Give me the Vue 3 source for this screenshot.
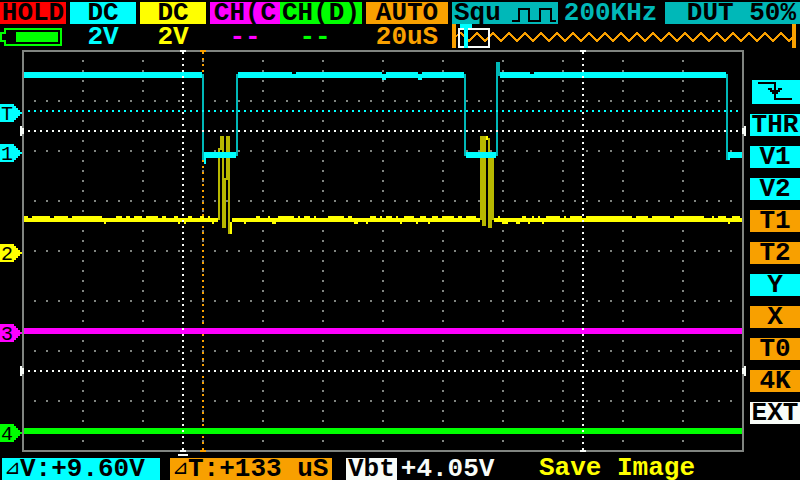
<script setup>
const steps = (from, to, step) => {
  const out = []
  for (let v = from; v <= to; v += step) out.push(v)
  return out
}
const dot = (x, y) => `M${x} ${y}h2v2h-2z`
const box = (x1, y1, x2, y2) => `M${x1} ${y1}H${x2}V${y2}H${x1}z`

const gridDots = [
  ...steps(100, 400, 50).flatMap((y) => steps(34, 730, 12).map((x) => dot(x, y))),
  ...steps(82, 682, 60).flatMap((x) => steps(60, 440, 10).map((y) => dot(x, y)))
].join('')

const hLine = (y) => steps(28, 736, 6).map((x) => dot(x, y)).join('')
const vLine = (x) => steps(58, 448, 6).map((y) => dot(x, y)).join('')

const whiteCursors = [hLine(130), hLine(370), vLine(182), vLine(582)].join('')
const triggerLine = hLine(110)
const timeLine = vLine(202)

const noiseUp = [
  [24, 28], [32, 50], [54, 68], [72, 102], [116, 122], [126, 130], [134, 142], [146, 158],
  [162, 166], [174, 178], [188, 192], [200, 204], [208, 210], [256, 260], [268, 270],
  [278, 294], [298, 300], [304, 310], [314, 316], [328, 344], [348, 352], [370, 376],
  [380, 382], [386, 392], [396, 398], [404, 414], [420, 426], [432, 438], [442, 454],
  [458, 462], [466, 476], [498, 500], [522, 526], [532, 534], [538, 540], [546, 560],
  [564, 566], [570, 582], [586, 632], [636, 648], [652, 670], [674, 704], [712, 714],
  [718, 726], [732, 740]
]
const noiseDown = [
  [104, 106], [178, 180], [184, 186], [212, 214], [244, 246], [272, 276], [354, 358],
  [366, 368], [400, 402], [416, 418], [428, 430], [502, 508], [516, 520], [528, 530],
  [542, 544], [728, 730]
]
const yellowTrace = [
  box(24, 218, 218, 222), box(232, 218, 480, 222), box(494, 218, 742, 222),
  box(230, 222, 232, 234), box(486, 136, 488, 140),
  ...noiseUp.map(([a, b]) => box(a, 216, b, 218)),
  ...noiseDown.map(([a, b]) => box(a, 222, b, 224))
].join('')
const yellowBurst = [
  box(218, 148, 220, 220), box(220, 136, 224, 150), box(222, 150, 224, 228),
  box(224, 178, 226, 228), box(226, 136, 230, 180), box(228, 180, 230, 234),
  box(480, 136, 486, 220), box(482, 220, 486, 226),
  box(488, 138, 490, 158), box(488, 158, 494, 220), box(488, 220, 492, 228)
].join('')
const cyanEdges = [
  box(202, 74, 204, 160), box(236, 74, 238, 156), box(464, 74, 466, 156),
  box(496, 62, 498, 156), box(498, 62, 500, 76), box(726, 74, 728, 160)
].join('')
const cyanTrace = [
  box(24, 72, 202, 78),
  box(238, 74, 464, 78), box(238, 72, 292, 74), box(296, 72, 382, 74),
  box(386, 72, 418, 74), box(422, 72, 464, 74),
  box(382, 78, 386, 80), box(418, 78, 422, 80),
  box(500, 74, 726, 78), box(500, 72, 530, 74), box(534, 72, 726, 74),
  box(204, 152, 236, 158), box(204, 158, 206, 164),
  box(466, 152, 496, 158), box(728, 152, 742, 158), box(728, 158, 730, 160)
].join('')

const markers = [
  { text: 'T', y: 104, tone: 'cyan' },
  { text: '1', y: 144, tone: 'cyan' },
  { text: '2', y: 244, tone: 'yellow' },
  { text: '3', y: 324, tone: 'magenta' },
  { text: '4', y: 424, tone: 'green' }
]

const channels = [
  { id: 'a', label: 'DC', value: '2V', tone: 'cyan' },
  { id: 'b', label: 'DC', value: '2V', tone: 'yellow' },
  { id: 'c', label: 'CH(C', value: '--', tone: 'magenta' },
  { id: 'd', label: 'CH(D)', value: '--', tone: 'green' },
  { id: 't', label: 'AUTO', value: '20uS', tone: 'orange' }
]

const zigzag =
  'M456 36L461 33' + steps(469, 773, 16).map((x) => `L${x} 41L${x + 8} 33`).join('') + 'L789 41L792 38'

const menu = [
  { text: 'THR', tone: 'cyan' },
  { text: 'V1', tone: 'cyan' },
  { text: 'V2', tone: 'cyan' },
  { text: 'T1', tone: 'orange' },
  { text: 'T2', tone: 'orange' },
  { text: 'Y', tone: 'cyan' },
  { text: 'X', tone: 'orange' },
  { text: 'T0', tone: 'orange' },
  { text: '4K', tone: 'orange' },
  { text: 'EXT', tone: 'white' }
]
</script>

<template>
  <div class="scope">
    <header class="top">
      <div class="cell">
        <span class="tag red">HOLD</span>
        <svg class="battery" viewBox="0 24 66 24" role="img" aria-label="Battery">
          <path d="M5 29H61V45H5V41H1V33H5z" class="battery-case" />
          <path d="M16 32H58V42H16z" class="fill-green" />
        </svg>
      </div>
      <div v-for="c in channels" :key="c.id" class="cell" :class="'cell-' + c.id">
        <span class="tag" :class="c.tone">{{ c.label }}</span>
        <span class="value" :class="'text-' + c.tone">{{ c.value }}</span>
      </div>
      <div class="generator">
        <div class="gen-row">
          <span class="tag teal wave">Squ
            <svg class="wave-icon" viewBox="512 2 46 22" aria-hidden="true">
              <path d="M512 21H519V9H529V21H540V9H551V21H556" />
            </svg>
          </span>
          <span class="freq">200KHz</span>
          <span class="tag teal duty">DUT 50%</span>
        </div>
        <svg class="timeline" viewBox="452 24 348 24" aria-hidden="true">
          <path :d="zigzag" class="zigzag" />
          <path d="M452 24h4v24h-4zM792 24h4v24h-4z" class="fill-orange" />
          <path d="M459 29H489V47H459z" class="window" />
          <path d="M460 24h12v4h-4v20h-4v-20h-4z" class="fill-cyan" />
        </svg>
      </div>
    </header>

    <main class="main">
      <svg class="plot" viewBox="0 48 750 408" role="img" aria-label="Waveforms">
        <path :d="gridDots" class="fill-gray" />
        <path :d="timeLine" class="fill-orange" />
        <path d="M23 51H743V451H23z" class="frame" />
        <path :d="yellowBurst" class="fill-olive" />
        <path :d="yellowTrace" class="fill-yellow" />
        <path :d="cyanEdges" class="fill-teal" />
        <path :d="cyanTrace" class="fill-cyan" />
        <path d="M24 328H742V334H24z" class="fill-magenta" />
        <path d="M24 428H742V434H24z" class="fill-green" />
        <path :d="triggerLine" class="fill-cyan" />
        <path :d="whiteCursors" class="fill-white" />
        <path
          d="M20 126h2v2h2v6h-2v2h-2zM20 366h2v2h2v6h-2v2h-2zM746 126h-2v2h-2v6h2v2h2zM746 366h-2v2h-2v6h2v2h2z
             M180 50h6v2h-2v2h-2v-2h-2zM580 50h6v2h-2v2h-2v-2h-2zM182 448h2v2h2v2h-6v-2h2zM582 448h2v2h2v2h-6v-2h2z
             M178 454h10v2h-10z"
          class="fill-white"
        />
        <path d="M200 50h6v2h-2v2h-2v-2h-2zM202 448h2v2h2v2h-6v-2h2z" class="fill-orange" />
        <g v-for="m in markers" :key="m.text">
          <path
            :d="`M0 ${m.y}H14v2h2v2h2v2h2v2h2v2h-2v2h-2v2h-2v2h-2v2H0z`"
            :class="'fill-' + m.tone"
          />
          <text x="7" :y="m.y + 16" class="marker-text">{{ m.text }}</text>
        </g>
      </svg>

      <nav class="menu" aria-label="Controls">
        <button class="item cyan edge" type="button" aria-label="Falling edge">
          <svg viewBox="752 80 48 24" aria-hidden="true">
            <path d="M758 83H775V99H792" class="edge-line" />
            <path d="M768 88h4v2h6v-2h4v2h-2v2h-2v2h-2v2h-2v-2h-2v-2h-2v-2h-2z" />
          </svg>
        </button>
        <button v-for="m in menu" :key="m.text" class="item" :class="m.tone" type="button">{{ m.text }}</button>
      </nav>
    </main>

    <footer class="bottom">
      <div class="tag cyan dv"><span class="delta">⊿</span><span>V:+9.60V</span></div>
      <div class="tag orange dt"><span class="delta">⊿</span><span>T:+133 uS</span></div>
      <div class="vbt"><span class="tag white vbt-tag">Vbt</span><span class="text-white">+4.05V</span></div>
      <div class="message text-yellow">Save Image</div>
    </footer>
  </div>
</template>

<style>
html,
body {
  background: #000;
}
</style>

<style scoped>
.scope {
  background: #000;
  color: #000;
  font-family: "Liberation Mono", monospace;
  font-size: 26px;
  font-weight: 700;
  line-height: 22px;
  overflow: hidden;
}
svg {
  display: block;
  shape-rendering: crispEdges;
}
.top {
  display: grid;
  grid-template-columns:
    minmax(0, 70fr) minmax(0, 70fr) minmax(0, 70fr) minmax(0, 70fr)
    minmax(0, 86fr) minmax(0, 86fr) minmax(0, 348fr);
  padding-top: 2px;
  white-space: nowrap;
}
.cell {
  display: flex;
  flex-direction: column;
  padding-right: 4px;
}
.cell-c {
  padding-right: 0;
}
.tag {
  display: block;
  height: 22px;
  text-align: center;
}
.value {
  height: 24px;
  line-height: 26px;
  text-align: center;
}
.cell-d .value {
  padding-right: 12px;
}
.battery {
  width: 100%;
}
.battery-case {
  fill: none;
  stroke: #00ff00;
  stroke-width: 2;
}
.gen-row {
  display: flex;
  height: 22px;
}
.wave {
  display: flex;
  gap: 11px;
  padding-left: 2px;
}
.wave-icon {
  width: 46px;
}
.wave-icon path {
  fill: none;
  stroke: #000;
  stroke-width: 2;
}
.freq {
  color: #00b8b8;
  padding: 0 8px 0 6px;
}
.duty {
  flex: 1;
  text-align: right;
  padding-right: 4px;
}
.timeline {
  width: 100%;
}
.zigzag {
  fill: none;
  stroke: #f8a000;
  stroke-width: 2;
}
.window {
  fill: none;
  stroke: #f8fcf8;
  stroke-width: 2;
}
.main {
  display: flex;
}
.plot {
  flex: 1;
  min-width: 0;
}
.frame {
  fill: none;
  stroke: #808480;
  stroke-width: 2;
}
.marker-text {
  font-size: 20px;
  font-weight: 400;
  text-anchor: middle;
}
.menu {
  display: flex;
  flex-direction: column;
  gap: 10px;
  width: 50px;
  padding-top: 32px;
}
.item {
  height: 22px;
  padding: 0;
  border: 0;
  color: #000;
  font: inherit;
  text-align: center;
}
.edge {
  height: 24px;
  margin-left: 2px;
}
.edge-line {
  fill: none;
  stroke: #000;
  stroke-width: 2;
}
.bottom {
  display: grid;
  grid-template-columns: minmax(0, 168fr) minmax(0, 176fr) minmax(0, 192fr) minmax(0, 262fr);
  padding: 2px 0 0 2px;
  white-space: nowrap;
}
.delta {
  width: 16px;
  font-size: 20px;
  font-weight: 400;
}
.dv,
.dt {
  display: flex;
  width: fit-content;
  padding-left: 2px;
}
.dv {
  padding-right: 15px;
}
.dt {
  padding-right: 4px;
}
.vbt {
  display: flex;
  gap: 4px;
}
.vbt-tag {
  padding: 0 2px;
}
.message {
  padding-left: 1px;
  line-height: 20px;
}
.red { background: #ff0000; }
.cyan { background: #00ffff; }
.yellow { background: #ffff00; }
.magenta { background: #ff00ff; }
.green { background: #00ff00; }
.orange { background: #f8a000; }
.teal { background: #00b8b8; }
.white { background: #f8fcf8; }
.text-cyan { color: #00ffff; }
.text-yellow { color: #ffff00; }
.text-magenta { color: #ff00ff; }
.text-green { color: #00ff00; }
.text-orange { color: #f8a000; }
.text-white { color: #f8fcf8; }
.fill-gray { fill: #808480; }
.fill-cyan { fill: #00ffff; }
.fill-teal { fill: #00b8b8; }
.fill-yellow { fill: #ffff00; }
.fill-olive { fill: #b8b800; }
.fill-magenta { fill: #ff00ff; }
.fill-green { fill: #00ff00; }
.fill-orange { fill: #f8a000; }
.fill-white { fill: #f8fcf8; }
</style>
